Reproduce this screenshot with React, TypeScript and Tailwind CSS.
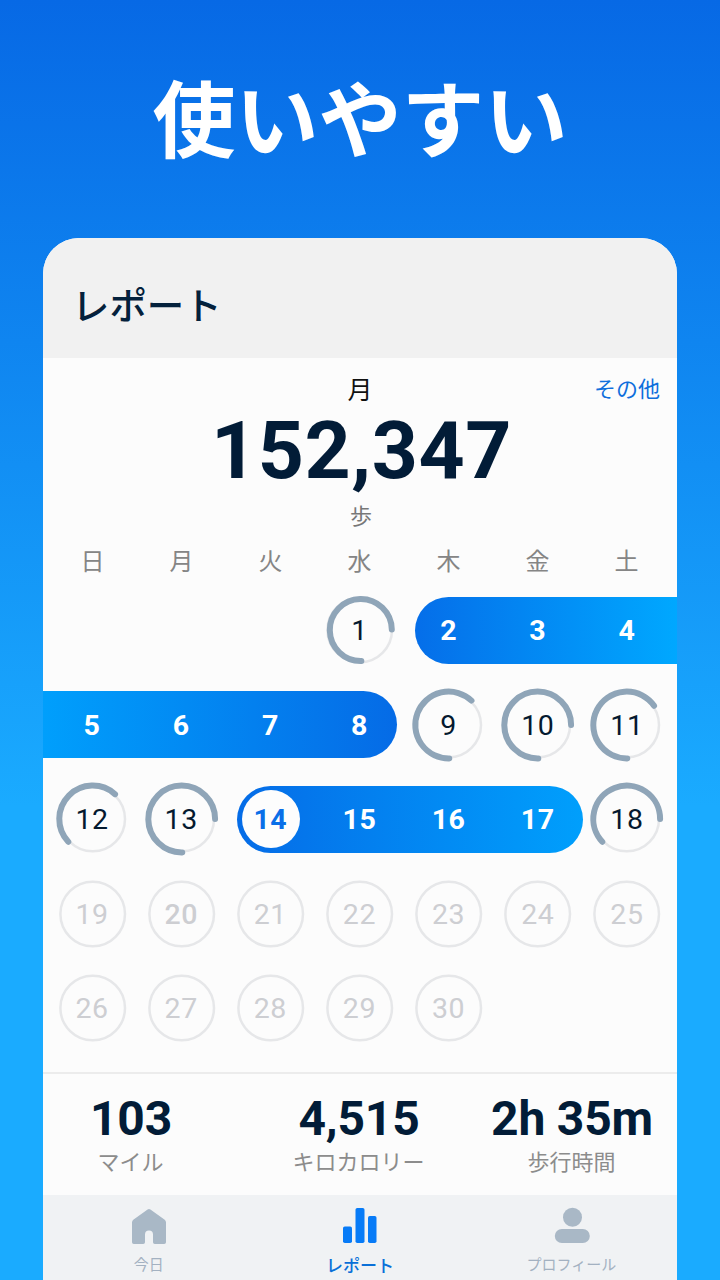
import type { ReactNode } from "react";

type Arc = { start: number; end: number; r: number; cx?: number };
type Day = {
  n: number;
  col: string;
  kind: "streak" | "today" | "ring" | "future";
  bold?: boolean;
  arc?: Arc;
};

const COLS = [
  "col-start-1",
  "col-start-2",
  "col-start-3",
  "col-start-4",
  "col-start-5",
  "col-start-6",
  "col-start-7",
];

const ARCS: Record<number, Arc> = {
  1: { start: 179, end: 89, r: 31, cx: 38.8 },
  9: { start: 179, end: 43, r: 33.4 },
  10: { start: 179, end: 90, r: 33.4 },
  11: { start: 179, end: 55, r: 33.4 },
  12: { start: 227, end: 42, r: 33.4 },
  13: { start: 179, end: 90, r: 33.4 },
  18: { start: 227, end: 90, r: 33.4 },
};

function makeDay(n: number): Day {
  const col = COLS[(n + 2) % 7];
  if (n === 14) return { n, col, kind: "today" };
  if (n > 18) return { n, col, kind: "future", bold: n === 20 };
  if (ARCS[n]) return { n, col, kind: "ring", arc: ARCS[n] };
  return { n, col, kind: "streak" };
}

const range = (a: number, b: number) =>
  Array.from({ length: b - a + 1 }, (_, i) => makeDay(a + i));

const WEEKS: { days: Day[]; pill?: string }[] = [
  {
    days: range(1, 4),
    pill: "col-start-5 col-end-8 ml-[10px] -mr-[6px] rounded-l-full bg-linear-to-r/srgb from-[#056ee9] to-[#00a8ff]",
  },
  {
    days: range(5, 11),
    pill: "col-start-1 col-end-5 -ml-[5px] mr-[8px] rounded-r-full bg-linear-to-l/srgb from-[#056be6] to-[#009ffc]",
  },
  {
    days: range(12, 18),
    pill: "col-start-3 col-end-7 ml-[10.5px] mr-0 rounded-full bg-linear-to-r/srgb from-[#056ce7] to-[#009ffc] w-[346px]",
  },
  { days: range(19, 25) },
  { days: range(26, 30) },
];

function arcPath({ start, end, r, cx = 37.7 }: Arc) {
  const at = (deg: number) => {
    const a = (deg * Math.PI) / 180;
    return `${(cx + r * Math.sin(a)).toFixed(2)} ${(38 - r * Math.cos(a)).toFixed(2)}`;
  };
  return `M${at(start)} A${r} ${r} 0 ${360 - start + end > 180 ? 1 : 0} 1 ${at(end)}`;
}

function Ring({ arc }: { arc?: Arc }) {
  return (
    <svg className="col-start-1 row-start-1 size-[76px]" viewBox="0 0 76 76" fill="none">
      <circle cx="37.7" cy="38" r="32.3" stroke="#e6e7e9" strokeWidth="2.5" />
      {arc && <path d={arcPath(arc)} stroke="#8fa5b8" strokeWidth="6" strokeLinecap="round" />}
    </svg>
  );
}

const DAY_TEXT = {
  streak: "font-bold text-white",
  today: "font-bold text-[#0a6fe8]",
  ring: "font-normal text-[#04192f]",
  future: "text-[#cdced2]",
};

function DayCell({ day }: { day: Day }) {
  return (
    <div className={`row-start-1 grid place-items-center ${day.col}`}>
      {(day.kind === "ring" || day.kind === "future") && <Ring arc={day.arc} />}
      {day.kind === "today" && (
        <span className="col-start-1 row-start-1 size-[58px] rounded-full bg-[#fdfdfd]" />
      )}
      <span
        className={`col-start-1 row-start-1 pt-[2px] pr-[1px] text-[28.5px] leading-none tracking-[0.6px] ${DAY_TEXT[day.kind]} ${day.bold ? "font-medium" : ""}`}
      >
        {day.n}
      </span>
    </div>
  );
}

function Stat({ value, label }: { value: string; label: string }) {
  return (
    <div className="flex flex-col items-center whitespace-nowrap">
      <span className="text-[48px] leading-[56px] font-bold tracking-[-0.2px] text-[#021c37]">{value}</span>
      <span className="pr-[1px] text-[22px] leading-[32px] text-[#8c8c8c]">{label}</span>
    </div>
  );
}

function Tab({ icon, label, active }: { icon: ReactNode; label: string; active?: boolean }) {
  return (
    <div className="flex flex-col items-center">
      {icon}
      <span
        className={
          active
            ? "mt-[9px] text-[17px] leading-[24px] font-medium text-[#0a70d8]"
            : "mt-[8px] text-[15px] leading-[24px] text-[#a3b1c1]"
        }
      >
        {label}
      </span>
    </div>
  );
}

export default function App() {
  return (
    <div
      lang="ja"
      className="flex h-[1280px] w-[720px] flex-col items-center overflow-hidden bg-linear-to-b/srgb from-[#0769e5] to-[#1aabff] to-[63%] font-['Roboto','Noto_Sans_CJK_JP',sans-serif]"
    >
      <h1 className="h-[238px] pt-[63px] text-[83px] leading-[120px] font-bold text-white">使いやすい</h1>
      <main className="flex h-[1042px] w-[634px] flex-col overflow-hidden rounded-t-[36px] bg-[#fcfcfc]">
        <header className="flex h-[120px] shrink-0 items-center bg-[#f1f1f1] pt-[18px] pl-[29px] text-[37.4px] font-medium text-[#04213c]">
          レポート
        </header>

        <section className="flex h-[716px] shrink-0 flex-col border-b-2 border-[#ececec] px-[5px]">
          <div className="grid h-[58px] grid-cols-[1fr_auto_1fr] items-center pt-[8px] pr-[12px] pl-[12px]">
            <span />
            <span className="text-[25px] text-[#111]">月</span>
            <span className="pb-[3px] text-right text-[22px] text-[#0f6fdc]">その他</span>
          </div>
          <div className="h-[77px] pl-[3px] text-center text-[80.5px] leading-[69px] font-bold tracking-[0.6px] text-[#021c37]">
            152,347
          </div>
          <div className="h-[48px] pl-[2px] text-center text-[22px] leading-[48px] text-[#777]">歩</div>
          <div className="grid h-[42px] grid-cols-7 pr-[1px] text-center text-[24px] leading-[43px] text-[#858585]">
            {["日", "月", "火", "水", "木", "金", "土"].map((d) => (
              <span key={d}>{d}</span>
            ))}
          </div>
          <div className="flex flex-col">
            {WEEKS.map((week, i) => (
              <div key={i} className="grid h-[94.5px] grid-cols-7 grid-rows-1 items-center">
                {week.pill && <div className={`row-start-1 h-[67px] ${week.pill}`} />}
                {week.days.map((day) => (
                  <DayCell key={day.n} day={day} />
                ))}
              </div>
            ))}
          </div>
        </section>

        <section className="flex h-[121px] shrink-0 pt-[17px] pl-[18px]">
          <div className="w-[140px]">
            <Stat value="103" label="マイル" />
          </div>
          <div className="ml-[58px] w-[200px]">
            <Stat value="4,515" label="キロカロリー" />
          </div>
          <div className="ml-[25px] w-[176px]">
            <Stat value="2h 35m" label="歩行時間" />
          </div>
        </section>

        <nav className="grid flex-1 grid-cols-3 bg-[#f0f2f4] pt-[12px]">
          <Tab
            label="今日"
            icon={
              <svg className="h-[38px] w-[36px]" viewBox="0 0 36 38" fill="#a9b8c6">
                <path d="M16.6 2.4Q18 1.4 19.4 2.4L33.7 12.8Q35 13.8 35 15.4V35.2Q35 37 33.2 37H23.8Q22 37 22 35.2V27.6A4 4 0 0 0 14 27.6V35.2Q14 37 12.2 37H2.8Q1 37 1 35.2V15.4Q1 13.8 2.3 12.8Z" />
              </svg>
            }
          />
          <Tab
            active
            label="レポート"
            icon={
              <svg className="h-[38px] w-[34px]" viewBox="0 0 34 38" fill="#077bf7">
                <rect x="0" y="19.5" width="9" height="16.5" rx="1.8" />
                <rect x="12.5" y="1" width="9" height="35" rx="1.8" />
                <rect x="25" y="9" width="8.5" height="27" rx="1.8" />
              </svg>
            }
          />
          <Tab
            label="プロフィール"
            icon={
              <svg className="h-[38px] w-[38px]" viewBox="0 0 38 38" fill="#a9b8c6">
                <circle cx="20.5" cy="10.3" r="9.5" />
                <rect x="2.8" y="22" width="35" height="14" rx="7" />
              </svg>
            }
          />
        </nav>
      </main>
    </div>
  );
}
